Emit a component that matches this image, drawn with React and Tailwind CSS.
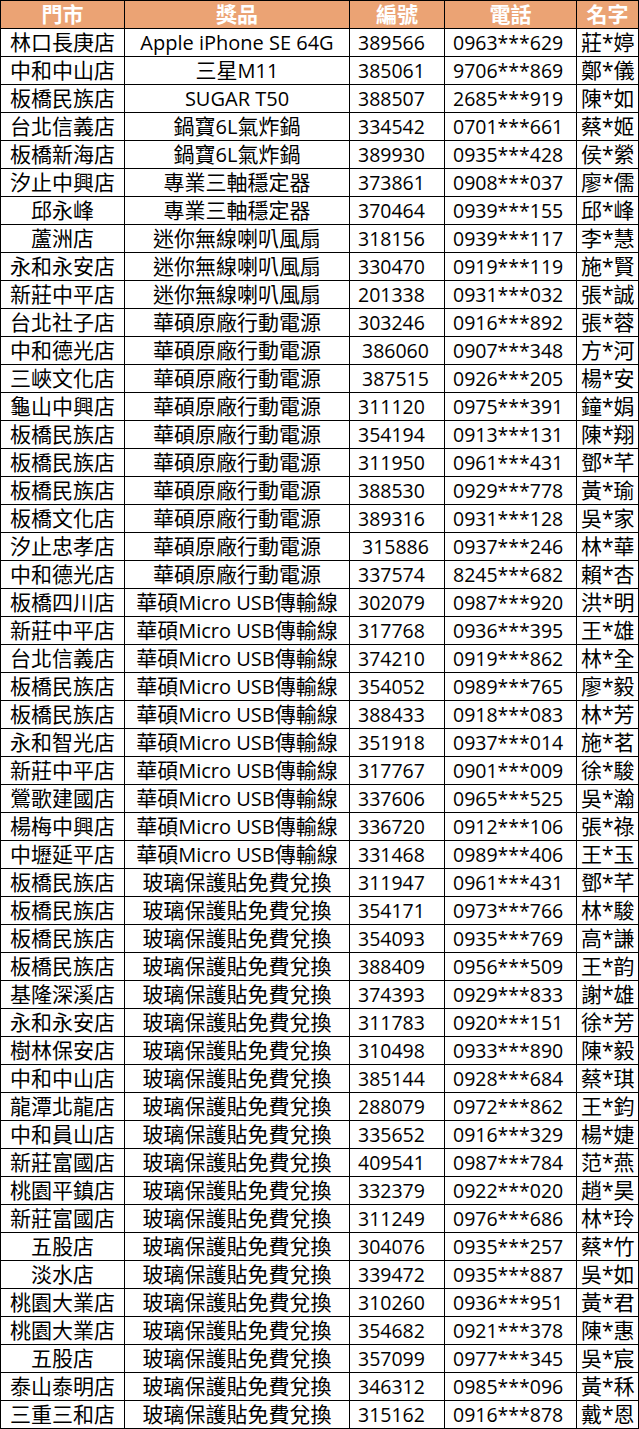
import React from 'react';

// 門市, 獎品, 編號, 電話, 名字 (pad = number sits a bit further right)
const rows = [
  ['林口長庚店', 'Apple iPhone SE 64G', '389566', '0963***629', '莊*婷'],
  ['中和中山店', '三星M11', '385061', '9706***869', '鄭*儀'],
  ['板橋民族店', 'SUGAR T50', '388507', '2685***919', '陳*如'],
  ['台北信義店', '鍋寶6L氣炸鍋', '334542', '0701***661', '蔡*姬'],
  ['板橋新海店', '鍋寶6L氣炸鍋', '389930', '0935***428', '侯*縈'],
  ['汐止中興店', '專業三軸穩定器', '373861', '0908***037', '廖*儒'],
  ['邱永峰', '專業三軸穩定器', '370464', '0939***155', '邱*峰'],
  ['蘆洲店', '迷你無線喇叭風扇', '318156', '0939***117', '李*慧'],
  ['永和永安店', '迷你無線喇叭風扇', '330470', '0919***119', '施*賢'],
  ['新莊中平店', '迷你無線喇叭風扇', '201338', '0931***032', '張*誠'],
  ['台北社子店', '華碩原廠行動電源', '303246', '0916***892', '張*蓉'],
  ['中和德光店', '華碩原廠行動電源', '386060', '0907***348', '方*河', true],
  ['三峽文化店', '華碩原廠行動電源', '387515', '0926***205', '楊*安', true],
  ['龜山中興店', '華碩原廠行動電源', '311120', '0975***391', '鐘*娟'],
  ['板橋民族店', '華碩原廠行動電源', '354194', '0913***131', '陳*翔'],
  ['板橋民族店', '華碩原廠行動電源', '311950', '0961***431', '鄧*芊'],
  ['板橋民族店', '華碩原廠行動電源', '388530', '0929***778', '黃*瑜'],
  ['板橋文化店', '華碩原廠行動電源', '389316', '0931***128', '吳*家'],
  ['汐止忠孝店', '華碩原廠行動電源', '315886', '0937***246', '林*華', true],
  ['中和德光店', '華碩原廠行動電源', '337574', '8245***682', '賴*杏'],
  ['板橋四川店', '華碩Micro USB傳輸線', '302079', '0987***920', '洪*明'],
  ['新莊中平店', '華碩Micro USB傳輸線', '317768', '0936***395', '王*雄'],
  ['台北信義店', '華碩Micro USB傳輸線', '374210', '0919***862', '林*全'],
  ['板橋民族店', '華碩Micro USB傳輸線', '354052', '0989***765', '廖*毅'],
  ['板橋民族店', '華碩Micro USB傳輸線', '388433', '0918***083', '林*芳'],
  ['永和智光店', '華碩Micro USB傳輸線', '351918', '0937***014', '施*茗'],
  ['新莊中平店', '華碩Micro USB傳輸線', '317767', '0901***009', '徐*駿'],
  ['鶯歌建國店', '華碩Micro USB傳輸線', '337606', '0965***525', '吳*瀚'],
  ['楊梅中興店', '華碩Micro USB傳輸線', '336720', '0912***106', '張*祿'],
  ['中壢延平店', '華碩Micro USB傳輸線', '331468', '0989***406', '王*玉'],
  ['板橋民族店', '玻璃保護貼免費兌換', '311947', '0961***431', '鄧*芊'],
  ['板橋民族店', '玻璃保護貼免費兌換', '354171', '0973***766', '林*駿'],
  ['板橋民族店', '玻璃保護貼免費兌換', '354093', '0935***769', '高*謙'],
  ['板橋民族店', '玻璃保護貼免費兌換', '388409', '0956***509', '王*韵'],
  ['基隆深溪店', '玻璃保護貼免費兌換', '374393', '0929***833', '謝*雄'],
  ['永和永安店', '玻璃保護貼免費兌換', '311783', '0920***151', '徐*芳'],
  ['樹林保安店', '玻璃保護貼免費兌換', '310498', '0933***890', '陳*毅'],
  ['中和中山店', '玻璃保護貼免費兌換', '385144', '0928***684', '蔡*琪'],
  ['龍潭北龍店', '玻璃保護貼免費兌換', '288079', '0972***862', '王*鈞'],
  ['中和員山店', '玻璃保護貼免費兌換', '335652', '0916***329', '楊*婕'],
  ['新莊富國店', '玻璃保護貼免費兌換', '409541', '0987***784', '范*燕'],
  ['桃園平鎮店', '玻璃保護貼免費兌換', '332379', '0922***020', '趙*昊'],
  ['新莊富國店', '玻璃保護貼免費兌換', '311249', '0976***686', '林*玲'],
  ['五股店', '玻璃保護貼免費兌換', '304076', '0935***257', '蔡*竹'],
  ['淡水店', '玻璃保護貼免費兌換', '339472', '0935***887', '吳*如'],
  ['桃園大業店', '玻璃保護貼免費兌換', '310260', '0936***951', '黃*君'],
  ['桃園大業店', '玻璃保護貼免費兌換', '354682', '0921***378', '陳*惠'],
  ['五股店', '玻璃保護貼免費兌換', '357099', '0977***345', '吳*宸'],
  ['泰山泰明店', '玻璃保護貼免費兌換', '346312', '0985***096', '黃*秝'],
  ['三重三和店', '玻璃保護貼免費兌換', '315162', '0916***878', '戴*恩'],
];

// latin runs inside prize names are set a bit smaller, like Calibri next to JhengHei
function Prize({ text }) {
  const parts = text.split(/([A-Za-z0-9 ]+)/).filter(Boolean);
  return parts.map((p, i) =>
    /[A-Za-z0-9]/.test(p) ? (
      <span key={i} className="text-[20px]">{p}</span>
    ) : (
      <span key={i}>{p}</span>
    )
  );
}

export default function App() {
  const cell = 'border border-black h-[28px] p-0 leading-none whitespace-nowrap';
  return (
    <div className="bg-white w-[639px]" style={{ fontFamily: '"Open Sans", "Noto Sans CJK TC", sans-serif' }}>
      <table className="border-collapse table-fixed w-[638px] text-[21px] text-black">
        <colgroup>
          <col className="w-[124px]" />
          <col className="w-[225px]" />
          <col className="w-[95px]" />
          <col className="w-[132px]" />
          <col className="w-[62px]" />
        </colgroup>
        <thead>
          <tr className="bg-[#eba374] text-white">
            <th className={`${cell} font-bold text-center`}>門市</th>
            <th className={`${cell} font-bold text-center`}>獎品</th>
            <th className={`${cell} font-bold text-center`}>編號</th>
            <th className={`${cell} font-bold text-center`}>電話</th>
            <th className={`${cell} font-bold text-center`}>名字</th>
          </tr>
        </thead>
        <tbody>
          {rows.map((r, i) => (
            <tr key={i}>
              <td className={`${cell} text-center`}>{r[0]}</td>
              <td className={`${cell} text-center`}><Prize text={r[1]} /></td>
              <td className={`${cell} text-[19.5px] ${r[5] ? 'pl-3' : 'pl-2'}`}>{r[2]}</td>
              <td className={`${cell} text-[19.5px] pl-2`}>{r[3]}</td>
              <td className={`${cell} pl-1`}>{r[4]}</td>
            </tr>
          ))}
        </tbody>
      </table>
    </div>
  );
}
